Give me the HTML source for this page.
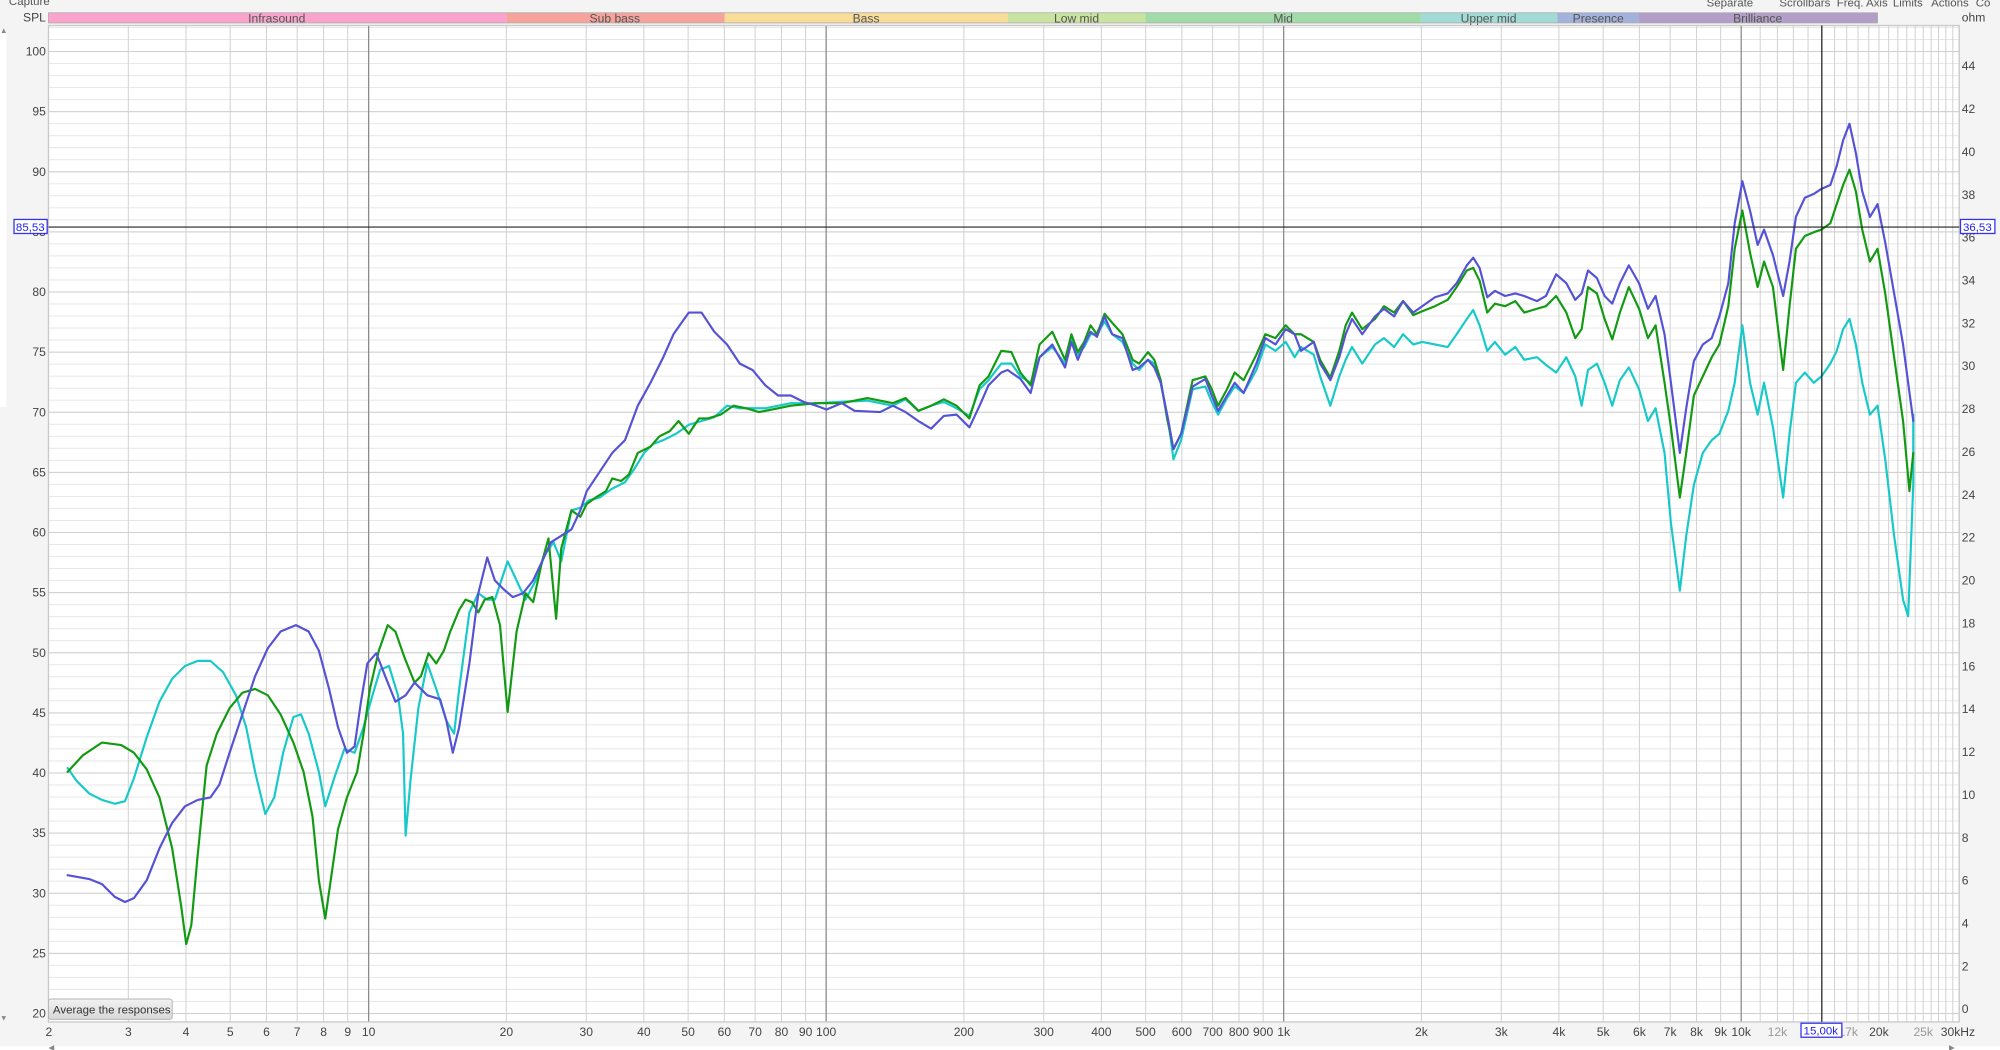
<!DOCTYPE html>
<html><head><meta charset="utf-8"><style>
html,body{margin:0;padding:0;background:#f4f4f4;}
svg{display:block;font-family:"Liberation Sans",sans-serif;}
</style></head><body>
<svg width="2000" height="1050" viewBox="0 0 1568 823" preserveAspectRatio="none" xmlns="http://www.w3.org/2000/svg">
<defs>
<pattern id="h1" x="0" y="40" width="10" height="9.425" patternUnits="userSpaceOnUse"><line x1="0" y1="0.3" x2="10" y2="0.3" stroke="#e4e4e4" stroke-width="0.8"/></pattern>
<pattern id="h5" x="0" y="40" width="10" height="47.125" patternUnits="userSpaceOnUse"><line x1="0" y1="0.3" x2="10" y2="0.3" stroke="#cfcfcf" stroke-width="1"/></pattern>
</defs>
<rect x="0" y="0" width="1568" height="823" fill="#f4f4f4"/>
<rect x="0" y="24" width="5" height="295" fill="#fff"/>
<rect x="0" y="820" width="1568" height="3" fill="#fff"/>
<rect x="38" y="20" width="1498" height="781" fill="#fff"/>
<rect x="38" y="20" width="1498" height="781" fill="url(#h1)"/>
<rect x="38" y="20" width="1498" height="781" fill="url(#h5)"/>
<g stroke="#d2d2d2" stroke-width="0.8">
<line x1="100.6" y1="20" x2="100.6" y2="801"/><line x1="145.8" y1="20" x2="145.8" y2="801"/><line x1="180.5" y1="20" x2="180.5" y2="801"/><line x1="208.9" y1="20" x2="208.9" y2="801"/><line x1="233" y1="20" x2="233" y2="801"/><line x1="253.7" y1="20" x2="253.7" y2="801"/><line x1="272.6" y1="20" x2="272.6" y2="801"/>
<line x1="397" y1="20" x2="397" y2="801"/><line x1="459.6" y1="20" x2="459.6" y2="801"/><line x1="504.8" y1="20" x2="504.8" y2="801"/><line x1="539.5" y1="20" x2="539.5" y2="801"/><line x1="567.9" y1="20" x2="567.9" y2="801"/><line x1="592" y1="20" x2="592" y2="801"/><line x1="612.7" y1="20" x2="612.7" y2="801"/><line x1="631.6" y1="20" x2="631.6" y2="801"/>
<line x1="755.7" y1="20" x2="755.7" y2="801"/><line x1="818.3" y1="20" x2="818.3" y2="801"/><line x1="863.5" y1="20" x2="863.5" y2="801"/><line x1="898.2" y1="20" x2="898.2" y2="801"/><line x1="926.6" y1="20" x2="926.6" y2="801"/><line x1="950.7" y1="20" x2="950.7" y2="801"/><line x1="971.4" y1="20" x2="971.4" y2="801"/><line x1="990.3" y1="20" x2="990.3" y2="801"/>
<line x1="1114.4" y1="20" x2="1114.4" y2="801"/><line x1="1177" y1="20" x2="1177" y2="801"/><line x1="1222.2" y1="20" x2="1222.2" y2="801"/><line x1="1256.9" y1="20" x2="1256.9" y2="801"/><line x1="1285.3" y1="20" x2="1285.3" y2="801"/><line x1="1309.4" y1="20" x2="1309.4" y2="801"/><line x1="1330.1" y1="20" x2="1330.1" y2="801"/><line x1="1349" y1="20" x2="1349" y2="801"/>
<line x1="1380" y1="20" x2="1380" y2="801"/><line x1="1393.5" y1="20" x2="1393.5" y2="801"/><line x1="1406" y1="20" x2="1406" y2="801"/><line x1="1417.5" y1="20" x2="1417.5" y2="801"/><line x1="1438.3" y1="20" x2="1438.3" y2="801"/><line x1="1447.8" y1="20" x2="1447.8" y2="801"/><line x1="1456.7" y1="20" x2="1456.7" y2="801"/><line x1="1465.1" y1="20" x2="1465.1" y2="801"/><line x1="1473.1" y1="20" x2="1473.1" y2="801"/><line x1="1480.7" y1="20" x2="1480.7" y2="801"/><line x1="1487.9" y1="20" x2="1487.9" y2="801"/><line x1="1494.9" y1="20" x2="1494.9" y2="801"/><line x1="1501.5" y1="20" x2="1501.5" y2="801"/><line x1="1507.8" y1="20" x2="1507.8" y2="801"/><line x1="1514" y1="20" x2="1514" y2="801"/><line x1="1519.8" y1="20" x2="1519.8" y2="801"/><line x1="1525.5" y1="20" x2="1525.5" y2="801"/><line x1="1531" y1="20" x2="1531" y2="801"/><line x1="1536" y1="20" x2="1536" y2="801"/>
</g>
<g stroke="#8a8a8a" stroke-width="1">
<line x1="289" y1="20" x2="289" y2="801"/><line x1="647.7" y1="20" x2="647.7" y2="801"/><line x1="1006.4" y1="20" x2="1006.4" y2="801"/><line x1="1365.1" y1="20" x2="1365.1" y2="801"/>
</g>
<rect x="38" y="20" width="1498" height="781" fill="none" stroke="#c8c8c8" stroke-width="1"/>
<!-- band bar -->
<g font-size="9.5" fill="#555" text-anchor="middle">
<rect x="38" y="10" width="359" height="8" fill="#f9a3cd"/><text x="217" y="17.5">Infrasound</text>
<rect x="397" y="10" width="171" height="8" fill="#f6a39c"/><text x="482" y="17.5">Sub bass</text>
<rect x="568" y="10" width="222" height="8" fill="#f8dc98"/><text x="679" y="17.5">Bass</text>
<rect x="790" y="10" width="108" height="8" fill="#c9e4a0"/><text x="844" y="17.5">Low mid</text>
<rect x="898" y="10" width="216" height="8" fill="#a1dca8"/><text x="1006" y="17.5">Mid</text>
<rect x="1114" y="10" width="107" height="8" fill="#a1dbd6"/><text x="1167" y="17.5">Upper mid</text>
<rect x="1221" y="10" width="64" height="8" fill="#a2b2dc"/><text x="1253" y="17.5">Presence</text>
<rect x="1285" y="10" width="187" height="8" fill="#b29ec8"/><text x="1378" y="17.5">Brilliance</text>
<rect x="38" y="10" width="1434" height="8" fill="none" stroke="#aaa" stroke-width="0.6"/>
</g>
<g font-size="9" fill="#555">
<text x="7" y="4">Capture</text>
<text x="1338" y="5">Separate</text><text x="1395" y="5">Scrollbars</text><text x="1440" y="5">Freq. Axis</text><text x="1484" y="5">Limits</text><text x="1514" y="5">Actions</text><text x="1549" y="5">Co</text>
</g>
<g font-size="9.5" fill="#444" text-anchor="end">
<text x="36" y="17">SPL</text>
<text x="36" y="43.5">100</text><text x="36" y="90.6">95</text><text x="36" y="137.8">90</text><text x="36" y="184.9">85</text><text x="36" y="232">80</text><text x="36" y="279.1">75</text><text x="36" y="326.3">70</text><text x="36" y="373.4">65</text><text x="36" y="420.5">60</text><text x="36" y="467.6">55</text><text x="36" y="514.8">50</text><text x="36" y="561.9">45</text><text x="36" y="609">40</text><text x="36" y="656.1">35</text><text x="36" y="703.3">30</text><text x="36" y="750.4">25</text><text x="36" y="797.5">20</text>
</g>
<g font-size="9.5" fill="#444">
<text x="1538" y="17">ohm</text>
<text x="1538" y="55">44</text><text x="1538" y="88.6">42</text><text x="1538" y="122.2">40</text><text x="1538" y="155.8">38</text><text x="1538" y="189.4">36</text><text x="1538" y="223">34</text><text x="1538" y="256.6">32</text><text x="1538" y="290.2">30</text><text x="1538" y="323.8">28</text><text x="1538" y="357.4">26</text><text x="1538" y="391">24</text><text x="1538" y="424.6">22</text><text x="1538" y="458.2">20</text><text x="1538" y="491.8">18</text><text x="1538" y="525.4">16</text><text x="1538" y="559">14</text><text x="1538" y="592.6">12</text><text x="1538" y="626.2">10</text><text x="1538" y="659.8">8</text><text x="1538" y="693.4">6</text><text x="1538" y="727">4</text><text x="1538" y="760.6">2</text><text x="1538" y="794.2">0</text>
</g>
<g font-size="9.5" fill="#444" text-anchor="middle">
<text x="38.3" y="812">2</text><text x="100.6" y="812">3</text><text x="145.8" y="812">4</text><text x="180.5" y="812">5</text><text x="208.9" y="812">6</text><text x="233" y="812">7</text><text x="253.7" y="812">8</text><text x="272.6" y="812">9</text><text x="289" y="812">10</text>
<text x="397" y="812">20</text><text x="459.6" y="812">30</text><text x="504.8" y="812">40</text><text x="539.5" y="812">50</text><text x="567.9" y="812">60</text><text x="592" y="812">70</text><text x="612.7" y="812">80</text><text x="631.6" y="812">90</text><text x="647.7" y="812">100</text>
<text x="755.7" y="812">200</text><text x="818.3" y="812">300</text><text x="863.5" y="812">400</text><text x="898.2" y="812">500</text><text x="926.6" y="812">600</text><text x="950.7" y="812">700</text><text x="971.4" y="812">800</text><text x="990.3" y="812">900</text><text x="1006.4" y="812">1k</text>
<text x="1114.4" y="812">2k</text><text x="1177" y="812">3k</text><text x="1222.2" y="812">4k</text><text x="1256.9" y="812">5k</text><text x="1285.3" y="812">6k</text><text x="1309.4" y="812">7k</text><text x="1330.1" y="812">8k</text><text x="1349" y="812">9k</text><text x="1365.1" y="812">10k</text>
<text x="1393.5" y="812" fill="#999">12k</text><text x="1449" y="812" fill="#999">17k</text><text x="1473.1" y="812">20k</text><text x="1507.8" y="812" fill="#999">25k</text><text x="1535" y="812">30kHz</text>
</g>
<!-- curves -->
<g fill="none" stroke-width="1.7" stroke-linejoin="round" stroke-linecap="round">
<polyline stroke="#17c9c9" points="53,602 60,612 70,622 80,627 90,630 98,628 105,610 115,578 125,550 135,532 145,522 155,518 165,518 175,527 185,545 193,570 200,605 208,638 215,625 222,590 230,562 236,560 242,575 250,605 255,632 262,610 270,587 278,590 285,570 292,545 298,525 305,522 312,545 316,575 318,655 322,610 328,555 335,520 342,540 350,565 356,575 360,540 368,480 375,465 382,470 388,470 393,455 398,440 405,455 412,470 420,455 427,435 434,425 440,440 448,400 455,398 462,392 470,390 480,383 490,378 497,368 505,355 512,348 520,345 530,340 540,333 550,330 560,327 570,318 580,320 600,320 620,316 640,316 660,315 680,314 700,318 710,313 720,322 730,318 740,315 750,320 760,326 768,305 775,298 785,285 793,285 800,295 808,300 815,280 825,272 835,285 840,265 845,278 850,272 855,262 860,262 866,252 872,262 880,268 888,285 893,290 900,282 905,285 910,300 916,330 920,360 926,345 935,305 945,303 950,315 955,325 962,312 968,303 975,308 985,290 992,270 1000,275 1008,268 1015,280 1020,272 1030,278 1035,295 1043,318 1050,295 1055,282 1060,272 1068,285 1078,270 1085,265 1093,272 1100,262 1108,270 1115,268 1125,270 1135,272 1142,262 1150,250 1155,243 1160,255 1166,275 1172,268 1180,278 1188,272 1195,282 1205,280 1212,286 1220,292 1228,280 1235,295 1240,318 1245,290 1252,285 1258,300 1264,318 1270,298 1277,288 1285,305 1292,330 1298,320 1305,355 1310,410 1317,463 1322,420 1328,380 1335,355 1342,345 1348,340 1355,322 1360,300 1366,255 1372,300 1378,325 1383,300 1390,335 1398,390 1403,340 1408,300 1415,292 1422,300 1428,295 1435,285 1440,275 1445,258 1450,250 1455,270 1460,300 1466,325 1472,318 1478,360 1485,420 1492,470 1496,483 1500,380 1500,325"/>
<polyline stroke="#129a12" points="53,605 65,592 80,582 95,584 105,590 115,603 125,625 135,665 142,710 146,740 150,725 155,670 162,600 170,575 180,555 190,543 200,540 210,545 220,560 230,582 238,605 245,640 250,690 255,720 260,685 265,650 272,625 280,605 285,575 290,540 297,510 304,490 310,495 317,515 325,535 330,530 336,512 342,520 348,510 353,495 360,478 365,470 370,472 375,480 380,470 386,468 392,490 398,558 405,495 412,465 418,472 425,440 430,422 436,485 440,430 448,400 455,405 460,395 467,390 475,385 480,375 487,377 493,372 500,355 510,350 517,342 525,338 532,330 540,340 548,328 555,328 565,325 575,318 585,320 595,323 610,320 620,318 640,316 660,316 680,312 700,316 710,312 720,322 730,318 740,313 750,318 760,328 768,302 775,295 785,275 793,276 800,292 808,302 815,270 825,260 835,282 840,262 845,276 850,268 855,255 860,262 866,246 872,253 880,262 888,282 893,285 900,276 905,282 910,298 915,328 920,352 926,340 935,298 945,295 950,305 955,318 962,305 968,292 975,298 985,278 992,262 1000,265 1008,255 1015,262 1020,262 1030,268 1035,282 1043,296 1050,275 1055,255 1060,245 1068,258 1078,250 1085,240 1093,245 1100,236 1108,247 1115,244 1125,240 1135,235 1142,225 1150,212 1155,210 1160,220 1166,245 1172,238 1180,240 1188,236 1195,245 1205,242 1212,240 1220,232 1228,245 1235,265 1240,258 1245,225 1252,230 1258,250 1264,266 1270,245 1277,225 1285,242 1292,265 1298,255 1305,300 1310,335 1317,390 1322,355 1328,310 1335,295 1342,280 1348,270 1355,240 1360,195 1366,165 1372,198 1378,225 1383,205 1390,225 1398,290 1403,240 1408,195 1415,185 1422,182 1428,180 1435,175 1440,160 1445,145 1450,133 1455,150 1460,180 1466,205 1472,195 1478,230 1485,280 1492,330 1497,385 1500,355"/>
<polyline stroke="#5552d6" points="53,686 70,689 80,693 90,703 98,707 105,704 115,690 125,665 135,645 145,632 155,627 165,625 172,615 180,590 190,560 200,530 210,508 220,495 232,490 242,495 250,510 258,540 265,570 272,590 278,585 283,550 288,520 295,512 302,530 310,550 318,545 325,535 335,545 345,548 350,565 355,590 360,570 368,520 375,465 382,437 388,455 395,462 402,468 410,465 418,455 425,440 432,425 440,420 448,415 455,400 460,385 470,370 480,355 490,345 500,318 510,300 520,280 528,262 535,252 540,245 550,245 560,260 570,270 580,285 590,290 600,302 610,310 620,310 630,315 640,318 648,321 660,316 670,322 690,323 700,318 710,323 720,330 730,336 740,326 750,325 760,335 768,318 775,302 785,292 790,290 800,297 808,308 815,280 825,270 835,288 840,268 845,282 850,270 855,260 860,264 866,248 872,262 880,265 888,290 893,288 900,282 905,288 910,300 916,330 920,352 926,340 935,303 945,297 950,310 955,322 962,310 968,300 975,308 985,285 992,265 1000,270 1008,258 1015,262 1020,275 1030,268 1035,285 1043,298 1050,280 1055,262 1060,250 1068,262 1078,248 1085,242 1093,248 1100,236 1108,245 1115,240 1125,233 1135,230 1142,222 1150,208 1155,202 1160,210 1166,233 1172,228 1180,232 1188,230 1195,232 1205,236 1212,232 1220,215 1228,222 1235,235 1240,230 1245,212 1252,218 1258,232 1264,238 1270,222 1277,208 1285,222 1292,242 1298,232 1305,262 1310,300 1317,355 1322,320 1328,283 1335,270 1342,265 1348,248 1355,222 1360,175 1366,142 1372,165 1378,192 1383,180 1390,200 1398,232 1403,205 1408,170 1415,155 1422,152 1428,148 1435,145 1440,130 1445,110 1450,97 1455,120 1460,150 1466,170 1472,160 1478,190 1485,230 1492,270 1500,330"/>
</g>
<!-- cursors -->
<line x1="38" y1="178" x2="1536" y2="178" stroke="#222" stroke-width="0.9"/>
<line x1="1428.3" y1="20" x2="1428.3" y2="801" stroke="#222" stroke-width="1"/>
<g font-size="9" fill="#2222ee">
<rect x="11" y="172" width="26" height="11" fill="#fff" stroke="#3333ee" stroke-width="1"/><text x="12.5" y="181">85,53</text>
<rect x="1537" y="172" width="27" height="11" fill="#fff" stroke="#3333ee" stroke-width="1"/><text x="1539" y="181">36,53</text>
<rect x="1412" y="802" width="32" height="11" fill="#fff" stroke="#3333ee" stroke-width="1"/><text x="1414" y="811">15,00k</text>
</g>
<!-- button -->
<linearGradient id="bg" x1="0" y1="0" x2="0" y2="1"><stop offset="0" stop-color="#f2f2f2"/><stop offset="1" stop-color="#d8d8d8"/></linearGradient>
<rect x="38" y="783" width="97" height="16" rx="2" fill="url(#bg)" stroke="#b5b5b5" stroke-width="0.8"/>
<text x="41.5" y="794.5" font-size="9" fill="#333">Average the responses</text>
<text x="0" y="26" font-size="6" fill="#888">▲</text>
<text x="0" y="800" font-size="6" fill="#888">▼</text>
<text x="38" y="823" font-size="6" fill="#888">◀</text>
<text x="1528" y="823" font-size="6" fill="#888">▶</text>
</svg>
</body></html>
